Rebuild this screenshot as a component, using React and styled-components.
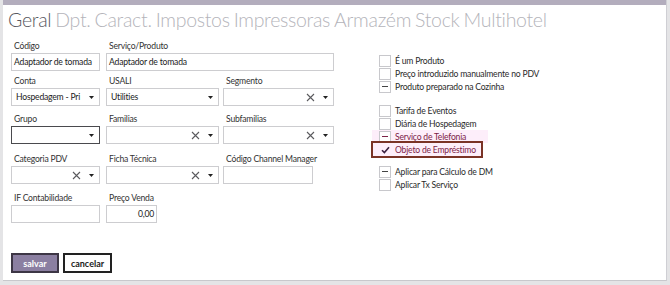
import React from 'react';
import styled, { createGlobalStyle } from 'styled-components';

const Global = createGlobalStyle`
  html, body {
    margin: 0;
    padding: 0;
    background: #e4e4e6;
  }
  body {
    font-family: Lato, 'Noto Sans', sans-serif;
    font-size: 8.6px;
    letter-spacing: -0.2px;
    color: #222;
  }
`;

// estrutura geral
const Page = styled.div`
  width: 670px;
  height: 285px;
  padding-left: 3px;
  box-sizing: border-box;
  overflow: hidden;
`;
const Dialog = styled.div`
  width: 664px;
  height: 281px;
  background: #fff;
  border-right: 1px solid #cfcfd4;
  border-bottom: 1px solid #c8c8cc;
  box-sizing: border-box;
  display: flex;
  flex-direction: column;
`;
const TitleBar = styled.div`
  height: 5px;
  background: #b3adbd;
  flex-shrink: 0;
`;
const Tabs = styled.div`
  display: flex;
  height: 35px;
  padding-left: 5px;
  align-items: flex-start;
  font-family: Lato, 'Open Sans', sans-serif;
  font-size: 19.5px;
  font-weight: 300;
  letter-spacing: -0.3px;
  line-height: 29px;
  white-space: nowrap;
`;
const Tab = styled.span`
  margin-right: 4px;
  color: ${(p) => (p.$active ? '#585860' : '#b4b4ba')};
`;
const Body = styled.div`
  display: flex;
  padding-left: 8px;
`;
const Form = styled.div`
  width: 323px;
  display: flex;
  flex-direction: column;
`;
const Row = styled.div`
  display: flex;
  margin-top: ${(p) => p.$mt || 0}px;
`;
const Field = styled.div`
  width: ${(p) => p.$w}px;
  margin-right: ${(p) => p.$mr ?? 6}px;
  display: flex;
  flex-direction: column;
`;
const Label = styled.div`
  height: 13px;
  line-height: 12px;
  padding-left: 3px;
  color: #333;
  white-space: nowrap;
`;
const TextBox = styled.div`
  height: 18px;
  box-sizing: border-box;
  border: 1px solid #cdcdd0;
  padding: 0 2px;
  line-height: 16px;
  text-align: ${(p) => p.$align || 'left'};
  white-space: nowrap;
  overflow: hidden;
  color: #222;
`;
const Select = styled.div`
  height: 18px;
  box-sizing: border-box;
  border: 1px solid ${(p) => (p.$focus ? '#4a4a4e' : '#cdcdd0')};
  display: flex;
  align-items: center;
  padding: 0 5px 0 4px;
  gap: 8px;
  white-space: nowrap;
`;
const SelectText = styled.span`
  flex: 1;
  overflow: hidden;
`;
const Icon = styled.svg`
  flex-shrink: 0;
  display: block;
`;

const Clear = () => (
  <Icon width="9" height="9" viewBox="0 0 9 9">
    <path d="M1 1L8 8M8 1L1 8" stroke="#5a5a5e" strokeWidth="1.1" />
  </Icon>
);
const Caret = () => (
  <Icon width="5" height="3" viewBox="0 0 5 3">
    <path d="M0 0H5L2.5 3Z" fill="#222" />
  </Icon>
);

const Combo = ({ text, clear, focus }) => (
  <Select $focus={focus}>
    <SelectText>{text}</SelectText>
    {clear && <Clear />}
    <Caret />
  </Select>
);

// lado direito - checkboxes
const Side = styled.div`
  margin-left: 38px;
  padding-top: 14px;
  display: flex;
  flex-direction: column;
`;
const Group = styled.div`
  display: flex;
  flex-direction: column;
  align-items: flex-start;
  margin-top: ${(p) => p.$mt || 0}px;
`;
const Check = styled.div`
  display: flex;
  align-items: center;
  height: 13px;
  padding-left: 7px;
  box-sizing: border-box;
  white-space: nowrap;
  width: ${(p) => (p.$hl ? '116px' : 'auto')};
  background: ${(p) => (p.$hl ? '#fdeefa' : 'transparent')};
  color: ${(p) => (p.$hl ? '#7c2347' : '#2a2a2a')};
  &.selected {
    width: 110px;
    height: 15px;
    margin-top: -1px;
    margin-bottom: -1px;
    outline: 2px solid #7a3326;
    outline-offset: -1px;
  }
`;
const Box = styled.span`
  width: 12px;
  height: 12px;
  box-sizing: border-box;
  border: 1px solid #c8c8cc;
  margin-right: 4px;
  display: flex;
  align-items: center;
  justify-content: center;
  flex-shrink: 0;
  background: #fff;
  &.mark {
    border-color: transparent;
    background: transparent;
  }
`;
const Dash = styled.span`
  width: 6px;
  height: 1px;
  background: ${(p) => p.$c || '#444'};
`;

const CheckItem = ({ label, state, hl, selected }) => (
  <Check $hl={hl} className={selected ? 'selected' : null}>
    <Box className={state === 'checked' ? 'mark' : null}>
      {state === 'dash' && <Dash $c={hl ? '#7c2347' : '#444'} />}
      {state === 'checked' && (
        <Icon width="9" height="8" viewBox="0 0 9 8">
          <path d="M1 4.2L3.4 6.6L8 1.2" stroke="#3a2040" strokeWidth="1.6" fill="none" />
        </Icon>
      )}
    </Box>
    {label}
  </Check>
);

// botões
const Footer = styled.div`
  display: flex;
  gap: 4px;
  padding-left: 8px;
  margin-top: 30px;
`;
const Button = styled.button`
  height: 20px;
  width: ${(p) => p.$w}px;
  box-sizing: border-box;
  border: 2px solid ${(p) => (p.$primary ? '#3d3645' : '#222')};
  background: ${(p) => (p.$primary ? '#8b7fa1' : '#fff')};
  color: ${(p) => (p.$primary ? '#fff' : '#222')};
  font-family: Lato, 'Noto Sans', sans-serif;
  font-size: 9px;
  font-weight: 700;
  padding: 0;
  cursor: pointer;
`;

const tabs = ['Geral', 'Dpt.', 'Caract.', 'Impostos', 'Impressoras', 'Armazém', 'Stock', 'Multihotel'];

const App = () => {
  return (
    <Page>
      <Global />
      <Dialog>
        <TitleBar />
        <Tabs>
          {tabs.map((t, i) => (
            <Tab key={t} $active={i === 0}>
              {t}
            </Tab>
          ))}
        </Tabs>
        <Body>
          <Form>
            <Row>
              <Field $w={89}>
                <Label>Código</Label>
                <TextBox>Adaptador de tomada</TextBox>
              </Field>
              <Field $w={228} $mr={0}>
                <Label>Serviço/Produto</Label>
                <TextBox>Adaptador de tomada</TextBox>
              </Field>
            </Row>
            <Row $mt={4}>
              <Field $w={89}>
                <Label>Conta</Label>
                <Combo text="Hospedagem - Pri" />
              </Field>
              <Field $w={113} $mr={4}>
                <Label>USALI</Label>
                <Combo text="Utilities" />
              </Field>
              <Field $w={111} $mr={0}>
                <Label>Segmento</Label>
                <Combo clear />
              </Field>
            </Row>
            <Row $mt={7}>
              <Field $w={89}>
                <Label>Grupo</Label>
                <Combo focus />
              </Field>
              <Field $w={113} $mr={4}>
                <Label>Familias</Label>
                <Combo clear />
              </Field>
              <Field $w={111} $mr={0}>
                <Label>Subfamilias</Label>
                <Combo clear />
              </Field>
            </Row>
            <Row $mt={9}>
              <Field $w={89}>
                <Label>Categoria PDV</Label>
                <Combo clear />
              </Field>
              <Field $w={113} $mr={4}>
                <Label>Ficha Técnica</Label>
                <Combo clear />
              </Field>
              <Field $w={90} $mr={0}>
                <Label>Código Channel Manager</Label>
                <TextBox />
              </Field>
            </Row>
            <Row $mt={8}>
              <Field $w={89}>
                <Label>IF Contabilidade</Label>
                <TextBox />
              </Field>
              <Field $w={51} $mr={0}>
                <Label>Preço Venda</Label>
                <TextBox $align="right">0,00</TextBox>
              </Field>
            </Row>
          </Form>
          <Side>
            <Group>
              <CheckItem label="É um Produto" />
              <CheckItem label="Preço introduzido manualmente no PDV" />
              <CheckItem label="Produto preparado na Cozinha" state="dash" />
            </Group>
            <Group $mt={11}>
              <CheckItem label="Tarifa de Eventos" />
              <CheckItem label="Diária de Hospedagem" />
              <CheckItem label="Serviço de Telefonia" state="dash" hl />
              <CheckItem label="Objeto de Empréstimo" state="checked" hl selected />
            </Group>
            <Group $mt={9}>
              <CheckItem label="Aplicar para Cálculo de DM" state="dash" />
              <CheckItem label="Aplicar Tx Serviço" />
            </Group>
          </Side>
        </Body>
        <Footer>
          <Button $primary $w={48}>
            salvar
          </Button>
          <Button $w={49}>cancelar</Button>
        </Footer>
      </Dialog>
    </Page>
  );
};

export default App;
